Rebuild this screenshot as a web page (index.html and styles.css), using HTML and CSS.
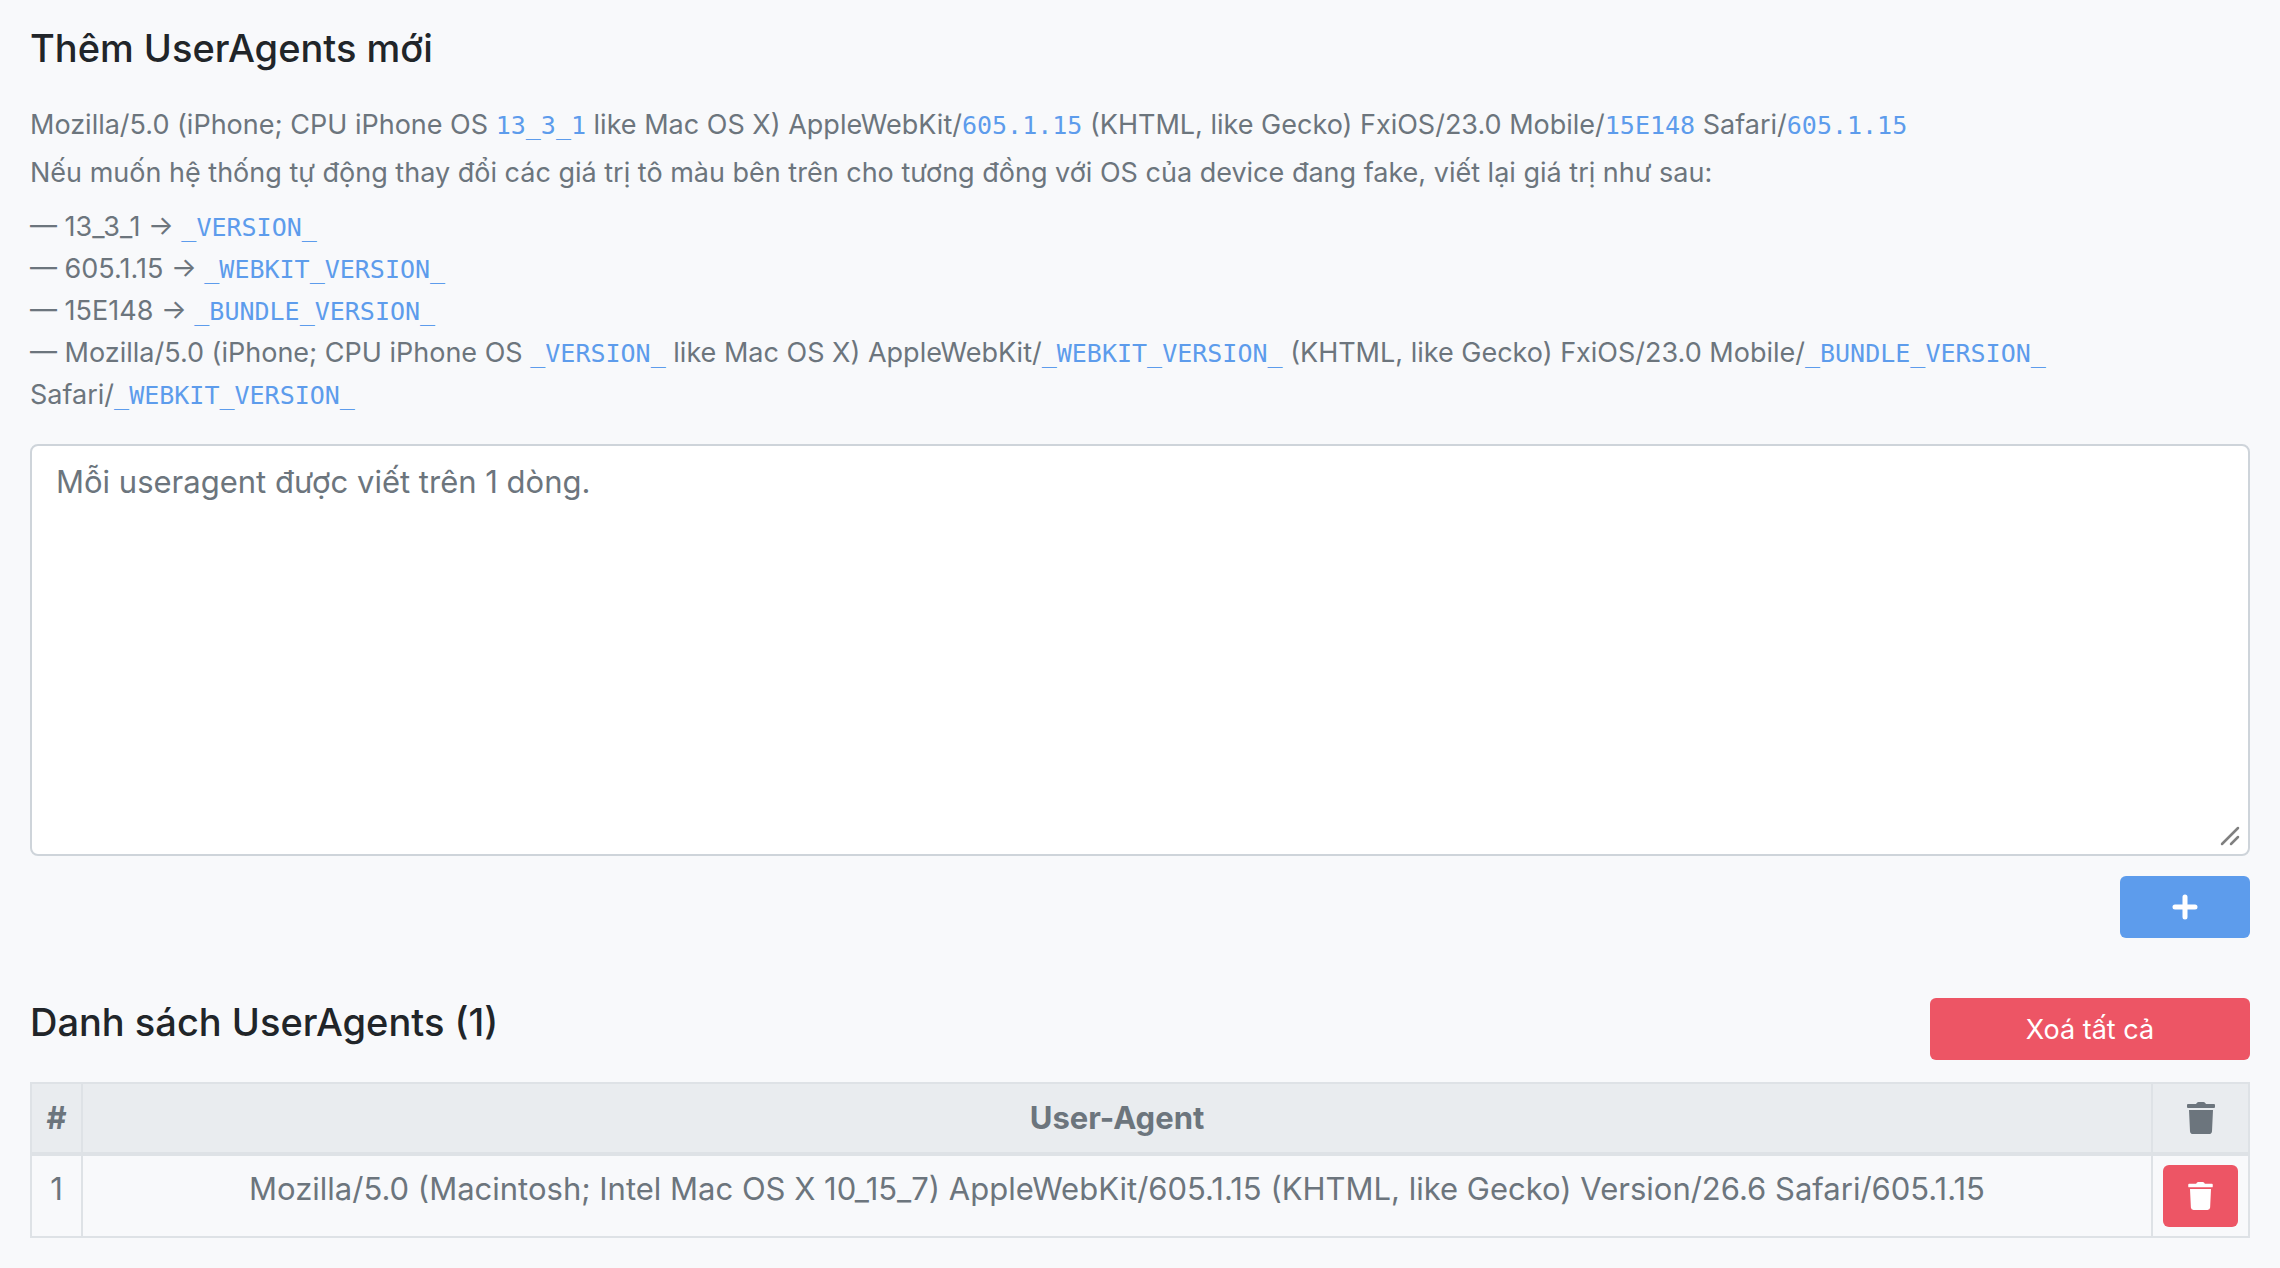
FILE: index.html
```html
<!DOCTYPE html>
<html lang="vi">

<head>
    <meta charset="UTF-8">
    <meta name="viewport" content="width=device-width, initial-scale=1.0">
    <title>UserAgents</title>
    <link rel="stylesheet" href="styles.css">
</head>

<body>

    <!-- ADD -->
    <form class="add-form">
        <h5><label for="useragents">Thêm UserAgents mới</label></h5>

        <div class="help">
            <p>Mozilla/5.0 (iPhone; CPU iPhone OS <code>13_3_1</code> like Mac OS X) AppleWebKit/<code>605.1.15</code> (KHTML, like Gecko) FxiOS/23.0 Mobile/<code>15E148</code> Safari/<code>605.1.15</code></p>
            <p>Nếu muốn hệ thống tự động thay đổi các giá trị tô màu bên trên cho tương đồng với OS của device đang fake, viết lại giá trị như sau:</p>
            <ul>
                <li>— 13_3_1 → <code>_VERSION_</code></li>
                <li>— 605.1.15 → <code>_WEBKIT_VERSION_</code></li>
                <li>— 15E148 → <code>_BUNDLE_VERSION_</code></li>
                <li>— Mozilla/5.0 (iPhone; CPU iPhone OS <code>_VERSION_</code> like Mac OS X) AppleWebKit/<code>_WEBKIT_VERSION_</code> (KHTML, like Gecko) FxiOS/23.0 Mobile/<code>_BUNDLE_VERSION_</code> <span class="nowrap">Safari/<code>_WEBKIT_VERSION_</code></span></li>
            </ul>
        </div>

        <div class="input-wrap">
            <textarea id="useragents" placeholder="Mỗi useragent được viết trên 1 dòng."></textarea>
            <svg class="grip" viewBox="0 0 20 20" aria-hidden="true">
                <path d="M2 18 18 2M11 18l7-7" />
            </svg>
        </div>

        <button type="button" class="btn btn-add" aria-label="+">
            <svg class="icon-plus" viewBox="0 0 26 26" aria-hidden="true">
                <path d="M13 3v20M3 13h20" />
            </svg>
        </button>
    </form>

    <!-- LIST -->
    <div class="list-header">
        <h5>Danh sách UserAgents (1)</h5>
        <button type="button" class="btn btn-danger btn-clear">Xoá tất cả</button>
    </div>

    <table class="table">
        <thead>
            <tr>
                <th class="col-id">#</th>
                <th>User-Agent</th>
                <th class="col-action">
                    <svg class="icon-trash" viewBox="0 0 28 32" aria-hidden="true">
                        <path d="M1 2h8l1-1.300q.5-.7 1.500-.7h5q1 0 1.500.7L19 2h8q1 0 1 1v2q0 1-1 1H1Q0 6 0 5V3q0-1 1-1zM2 8h24l-1 21.200Q24.800 32 22 32H6q-2.800 0-3-2.800z" />
                    </svg>
                </th>
            </tr>
        </thead>
        <tbody>
            <tr>
                <td>1</td>
                <td>Mozilla/5.0 (Macintosh; Intel Mac OS X 10_15_7) AppleWebKit/605.1.15 (KHTML, like Gecko) Version/26.6 Safari/605.1.15</td>
                <td class="col-action">
                    <button type="button" class="btn btn-danger btn-delete" aria-label="Xoá">
                        <svg class="icon-trash" viewBox="0 0 28 32" aria-hidden="true">
                            <path d="M1 2h8l1-1.300q.5-.7 1.500-.7h5q1 0 1.500.7L19 2h8q1 0 1 1v2q0 1-1 1H1Q0 6 0 5V3q0-1 1-1zM2 8h24l-1 21.200Q24.800 32 22 32H6q-2.800 0-3-2.800z" />
                        </svg>
                    </button>
                </td>
            </tr>
        </tbody>
    </table>

</body>

</html>
```
FILE: styles.css
```css
* {
    box-sizing: border-box;
}

body {
    margin: 0;
    padding: 24px 30px;
    background-color: #f8f9fb;
    color: #6c757d;
    font-family: Inter, "Liberation Sans", sans-serif;
    font-size: 31px;
    line-height: 48px;
}

h5 {
    margin: 0;
    color: #212529;
    font-size: 38px;
    font-weight: 500;
    line-height: 48px;
}

.help {
    margin: 32px 0 28px;
    font-size: 27px;
    line-height: 42px;
}

.help p {
    margin: 0 0 6px;
}

.help ul {
    margin: 12px 0 0;
    padding: 0;
    list-style: none;
}

.help .nowrap {
    white-space: nowrap;
}

code {
    color: #5d9cec;
    font-family: "DejaVu Sans Mono", monospace;
    font-size: 25px;
    line-height: 1;
}

.input-wrap {
    position: relative;
}

textarea {
    display: block;
    width: 100%;
    height: 412px;
    padding: 12px 24px;
    border: 2px solid #ced4da;
    border-radius: 8px;
    background-color: #fff;
    color: #495057;
    font-family: inherit;
    font-size: 31px;
    line-height: 48px;
    resize: none;
}

textarea::placeholder {
    color: #6c757d;
}

.grip {
    position: absolute;
    right: 10px;
    bottom: 10px;
    width: 20px;
    height: 20px;
    fill: none;
    stroke: #808080;
    stroke-width: 2.5;
    stroke-linecap: round;
    pointer-events: none;
}

.btn {
    display: flex;
    justify-content: center;
    align-items: center;
    height: 62px;
    padding: 0;
    border: none;
    border-radius: 6px;
    color: #fff;
    font-family: inherit;
    font-size: 27px;
    cursor: pointer;
}

.btn:hover {
    opacity: 0.9;
}

.btn-add {
    width: 130px;
    margin: 20px 0 0 auto;
    background-color: #5d9cec;
}

.btn-danger {
    background-color: #ed5565;
}

.btn-clear {
    width: 320px;
}

.btn-delete {
    width: 75px;
}

.icon-plus {
    width: 26px;
    height: 26px;
    stroke: #fff;
    stroke-width: 5;
    stroke-linecap: round;
}

.icon-trash {
    display: block;
    width: 28px;
    height: 32px;
    margin: 0 auto;
    fill: currentColor;
}

.btn .icon-trash {
    width: 25px;
    height: 28px;
    margin: 0;
}

.list-header {
    display: flex;
    justify-content: space-between;
    margin: 60px 0 22px;
}

.table {
    width: 100%;
    border-collapse: collapse;
    text-align: center;
}

.table th,
.table td {
    padding: 9px 10px;
    border: 2px solid #dee2e6;
    vertical-align: top;
}

.table thead th {
    padding: 10px;
    border-bottom-width: 4px;
    background-color: #e9ecef;
    font-weight: 700;
    vertical-align: middle;
}

.table .col-id {
    width: 51px;
}

.table .col-action {
    width: 97px;
}
```
